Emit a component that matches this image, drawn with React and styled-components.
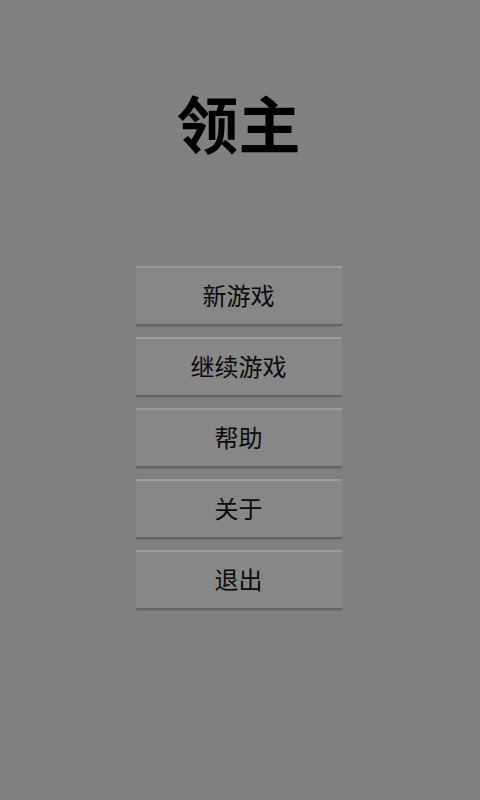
import styled, { createGlobalStyle } from "styled-components";

const GlobalStyle = createGlobalStyle`
body {
    margin: 0;
    background: #808080;
    font-family: "Noto Sans CJK SC", "Noto Sans", sans-serif;
}
`

const items = ["新游戏", "继续游戏", "帮助", "关于", "退出"];

function App(){

    const buttons = items.map((label, i)=>{
        return <MenuButton key = {i}>{label}</MenuButton>
    });

    return (
        <Screen>
            <GlobalStyle/>
            <Title>领主</Title>
            <Menu>
                {buttons}
            </Menu>
        </Screen>
    )
}

const Screen = styled.div`
min-height: 800px;
display: flex;
flex-direction: column;
align-items: center;
padding-top: 91px;
padding-right: 3px;
box-sizing: border-box;
`

const Title = styled.h1`
margin: 0;
font-size: 62px;
line-height: 62px;
font-weight: 700;
color: #000;
`

const Menu = styled.div`
margin-top: 113px;
display: flex;
flex-direction: column;
gap: 11px;
`

const MenuButton = styled.button`
width: 206px;
height: 60px;
box-sizing: border-box;
background: #878787;
border: none;
border-top: 2px solid #9b9b9b;
border-bottom: 2px solid #646464;
box-shadow: 0 1px 0 #747474;
border-radius: 1px;
font-family: "Noto Sans CJK SC", sans-serif;
font-size: 24px;
color: #0a0a0a;
padding: 0 0 3px 0;
`

export default App;
